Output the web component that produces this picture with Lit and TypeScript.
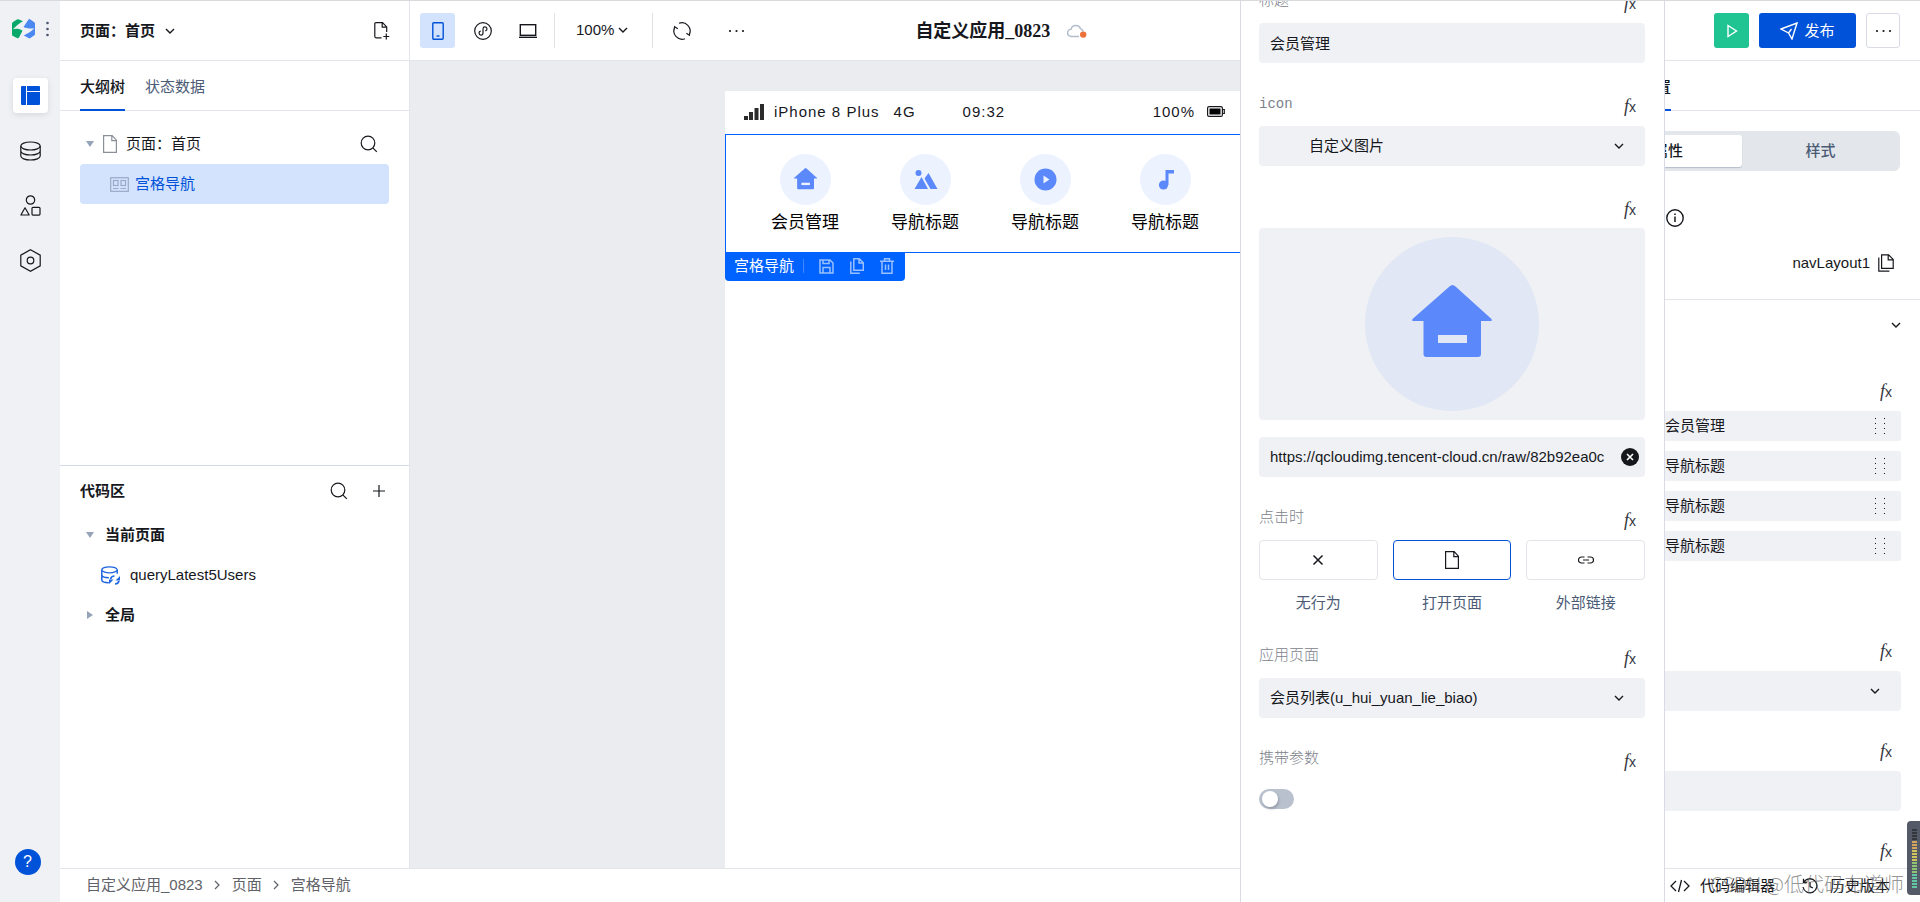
import { LitElement, html, css, svg, nothing, TemplateResult } from "lit";
import { customElement, state } from "lit/decorators.js";
import { classMap } from "lit/directives/class-map.js";

/** Wraps line-art in an SVG whose stroke follows the text colour. */
const icon = (w: number, h: number, body: unknown, cls = "") => html`<svg
  class="icon ${cls}" width=${w} height=${h} viewBox="0 0 ${w} ${h}" aria-hidden="true">${body}</svg>`;

const chevron = () => icon(10, 6, svg`<path d="M1 1l4 4 4-4" stroke-width="1.4"/>`);
const crumbArrow = () => icon(6, 10, svg`<path d="M1 1l4 4-4 4" stroke-width="1.2"/>`);
const search = () => icon(18, 18, svg`<circle cx="8" cy="8" r="6.8"/><path d="M12.8 12.8l4 4"/>`);
const dots = () => icon(17, 4, svg`<g fill="currentColor" stroke="none"><circle cx="2" cy="2" r="1.1"/><circle cx="8.5" cy="2" r="1.1"/><circle cx="15" cy="2" r="1.1"/></g>`);
const page = () => icon(14, 18, svg`<path d="M.6.6h8.6l4.2 4.6v12.2H.6zM8.8.8v4.8h4.4"/>`);
const caretDown = () => icon(8, 6, svg`<path d="M0 0h8L4 6z" fill="currentColor" stroke="none"/>`, "caret");
const caretRight = () => icon(8, 8, svg`<path d="M1 0l6 4-6 4z" fill="currentColor" stroke="none"/>`, "caret");
const copy = () => icon(16, 18, svg`<path d="M3.6.8h7l4.6 4.6v9H3.6zM10.2 1v4.8h4.8M.8 3.6v13.6h10.6"/>`);

const house = (size: number, bg: string) => html`<svg width=${size} height=${size} viewBox="0 0 174 174" aria-hidden="true">
  <circle cx="87" cy="87" r="87" fill=${bg}/>
  <path d="M84.500 49.500q3-3 6 0L126.500 82q1 2-1 2H116v33q0 3-3 3H61.500q-3 0-3-3V84H48.500q-2 0-1-2z" fill="#5b88fa"/>
  <rect x="73" y="98" width="29" height="8" fill=${bg}/>
</svg>`;
const badge = (body: unknown) => html`<svg width="51" height="51" viewBox="0 0 51 51" aria-hidden="true">
  <circle cx="25.500" cy="25.500" r="25.500" fill="#edf2ff"/><g fill="#5b88fa">${body}</g></svg>`;

interface NavItem { title: string; art: TemplateResult }

@customElement("app-root")
export class AppRoot extends LitElement {
  static styles = css`
    :host {
      display: grid;
      grid-template: minmax(0, 1fr) / 60px minmax(0, 1fr);
      position: relative;
      box-sizing: border-box;
      height: 100vh;
      overflow: hidden;
      border-top: 1px solid #d9dade;
      background: #fff;
      color: #16181d;
      font: 15px/20px "Liberation Sans", "Noto Sans CJK SC", sans-serif;
    }
    *, *::before { box-sizing: border-box; }
    button, input, select { font: inherit; color: inherit; margin: 0; border: 0; padding: 0; background: none; outline: none; }
    button { display: inline-flex; align-items: center; justify-content: center; cursor: pointer; }
    h1, h2, ul, ol, p { margin: 0; padding: 0; font: inherit; list-style: none; }
    svg { display: block; flex: none; }
    .icon { fill: none; stroke: currentColor; stroke-width: 1.2; }
    .strong { font-weight: 700; }
    .medium { font-weight: 500; }
    .grow { flex: 1; }

    .rail { display: flex; flex-direction: column; align-items: center; background: #f0f1f5; padding-bottom: 27px; }
    .brand { display: flex; align-items: center; gap: 11px; align-self: stretch; height: 55px; padding-left: 12px; margin-bottom: 22px; color: #4a5570; }
    .rail-nav { display: flex; flex-direction: column; gap: 20px; }
    .rail-btn { width: 35px; height: 35px; border-radius: 4px; }
    .rail-btn.on { background: #fff; color: #0052d9; box-shadow: 0 2px 6px rgba(0, 0, 0, .1); }
    .help { width: 26px; height: 26px; margin: auto 5px 0 0; border-radius: 50%; background: #0052d9; color: #fff; font-size: 16px; }

    .main { display: grid; grid-template: 60px minmax(0, 1fr) 34px / 350px minmax(0, 1fr) 360px; min-height: 0; }
    .page-head { display: flex; align-items: center; gap: 10px; padding: 0 19px 0 20px; border: solid #e3e5ea; border-width: 0 1px 1px 0; }
    .toolbar { grid-column: 2 / 4; display: flex; align-items: center; padding: 0 20px 0 10px; border-bottom: 1px solid #e3e5ea; }
    .devices { display: flex; gap: 10px; padding-right: 9px; }
    .tool { width: 35px; height: 35px; border-radius: 3px; }
    .tool.on { background: #d3e3fd; color: #0052d9; }
    .zoom { gap: 4px; height: 35px; padding: 0 24px 1px 21px; border: solid #e0e2e6; border-width: 0 1px; }
    .more-tools { display: flex; gap: 20px; padding-left: 11px; }
    .app-title { display: flex; align-items: center; gap: 17px; margin-left: 161px; font: 18px/24px "Liberation Serif", "Noto Sans CJK SC", serif; }
    .app-title h1 { font-weight: 600; }
    .actions { display: flex; gap: 10px; margin-left: auto; }
    .run { width: 35px; height: 35px; border-radius: 3px; background: #20c392; color: #fff; }
    .publish { gap: 6px; width: 97px; height: 35px; border-radius: 3px; background: #0052d9; color: #fff; }
    .more { width: 34px; height: 35px; border: 1px solid #d8dbe6; border-radius: 3px; }

    .side { display: flex; flex-direction: column; min-height: 0; border-right: 1px solid #e3e5ea; }
    .tabs { display: flex; flex: none; gap: 20px; height: 50px; padding: 0 20px; border-bottom: 1px solid #e3e5ea; color: #4b5b76; }
    .tab { height: 50px; padding-top: 4px; border-bottom: 2px solid transparent; }
    .tab.on { color: #16181d; border-color: #0052d9; }
    .tree { flex: 1; min-height: 0; padding: 13px 20px 0; }
    .row { display: flex; align-items: center; width: 100%; height: 40px; border-radius: 4px; }
    .caret { color: #97a3b9; width: 8px; }
    .tree-root { padding: 0 11px 1px 6px; }
    .tree-root .doc { color: #8b8f98; padding: 0 9px; }
    .tree-item { justify-content: flex-start; gap: 6px; padding-left: 30px; background: #d3e3fd; color: #0052d9; }
    .tree-item .icon { color: #9aa9c5; }
    .code { flex: none; height: 403px; padding: 0 20px; border-top: 1px solid #d5d8e6; }
    .code-head { display: flex; align-items: center; gap: 25px; height: 49px; padding-right: 4px; }
    .group { gap: 11px; padding-left: 6px; }
    .query { gap: 10px; justify-content: flex-start; padding-left: 21px; }
    .query .icon { color: #1e66e0; }

    .canvas { display: flex; justify-content: center; padding-top: 30px; background: #ebecf0; overflow: hidden; }
    .phone { width: 520px; background: #fff; }
    .status { display: grid; grid-template-columns: auto auto auto 1fr auto auto; align-items: center; height: 43px; padding: 0 20px 2px 19px; letter-spacing: 1px; }
    .status .device { padding: 0 14px 0 10px; }
    .status .network { padding-right: 47px; }
    .status .level { padding-right: 12px; }
    .grid { display: grid; grid-template-columns: repeat(4, 1fr); height: 119px; padding: 19px 19px 0; border: 1px solid #0062ff; color: #000; font-size: 17px; line-height: 24px; }
    .cell { display: flex; flex-direction: column; align-items: center; gap: 6px; }
    .tag { display: inline-flex; align-items: center; gap: 15px; height: 28px; padding: 0 11px 2px 9px; border-radius: 0 0 4px 4px; background: #0062ff; color: #fff; }
    .tag span { padding-right: 9px; border-right: 1px solid #3d86ff; line-height: 14px; }
    .tag button { color: #99c0ff; width: 15px; }

    .config { min-height: 0; overflow: hidden; display: flex; flex-direction: column; }
    .config .tabs { padding: 0 20px 0 81px; }
    .segment { display: grid; grid-template-columns: 1fr 1fr; flex: none; height: 40px; margin: 20px 20px 0 30px; padding: 4px; border-radius: 6px; background: #e3e6ea; color: #4b5b76; }
    .segment button { height: 32px; font-weight: 500; }
    .segment .on { margin-right: 3px; border-radius: 3px; background: #fff; color: #16181d; box-shadow: 0 1px 1px #b4bdcb; }
    .about { display: flex; flex: none; align-items: center; height: 24px; margin-top: 35px; padding-left: 106px; }
    .ident { display: flex; flex: none; align-items: center; justify-content: flex-end; gap: 8px; height: 50px; margin-top: 20px; padding: 0 26px 23px 0; border-bottom: 1px solid #e3e5ea; }
    .section { justify-content: flex-end; flex: none; height: 51px; padding: 0 19px 2px 0; }
    .props { padding: 0 19px 0 30px; }
    .prop { padding-top: 28px; }
    .prop .fx { margin-left: auto; margin-right: 7px; margin-bottom: 8px; }
    .items { display: grid; gap: 10px; padding-bottom: 50px; }
    .item { display: flex; align-items: center; justify-content: space-between; height: 30px; padding: 0 15px 0 75px; border-radius: 3px; background: #f0f1f5; }

    .fx { display: flex; align-items: baseline; justify-content: center; width: 16px; height: 24px; color: #33363d; font: italic 18px/24px "Liberation Serif", serif; }
    .fx small { font: 14px/24px "Liberation Sans", sans-serif; }

    .crumbs { grid-column: 1 / 3; border-top: 1px solid #e3e5ea; }
    .crumbs ol { display: flex; align-items: center; gap: 12px; height: 33px; padding: 0 0 2px 26px; color: #5f6268; }
    .crumbs li { display: flex; align-items: center; gap: 11px; }
    .crumbs a { color: inherit; text-decoration: none; }
    .foot { display: flex; align-items: center; padding: 0 30px 0 110px; border-top: 1px solid #e3e5ea; }
    .foot button { gap: 10px; white-space: nowrap; }
    .foot button + button { gap: 12px; margin-left: auto; }

    .drawer { position: absolute; top: 0; right: 255px; bottom: 0; width: 425px; padding: 0 19px 0 18px; overflow: hidden; background: #fff; border: solid #d8dae6; border-width: 0 1px; }
    .fields { display: grid; gap: 29px; margin-top: -12px; }
    .field { display: grid; gap: 10px; min-width: 0; }
    .caption { display: flex; justify-content: space-between; height: 24px; padding-right: 7px; color: #7d828b; font-weight: 300; line-height: 22px; }
    .caption .latin { font-family: "Liberation Mono", monospace; font-size: 14px; }
    .caption .fx { margin-top: 2px; }
    .box { display: flex; align-items: center; height: 40px; border-radius: 4px; background: #f0f1f5; }
    .box input, .box select { flex: 1; min-width: 0; height: 40px; padding: 0 0 1px 11px; appearance: none; }
    .box .indent { padding-left: 50px; }
    .box .icon { margin-right: 21px; pointer-events: none; }
    .clear { width: 18px; height: 18px; margin: 0 6px 0 17px; border-radius: 50%; background: #16181d; color: #fff; }
    .box .clear .icon { margin: 0; }
    .preview { display: flex; align-items: center; justify-content: center; height: 192px; margin: -1px 0 7px; border-radius: 4px; background: #f0f1f5; }
    .choices { display: grid; grid-template-columns: repeat(3, 1fr); gap: 15px; }
    .choice { display: grid; gap: 11px; text-align: center; line-height: 24px; color: #4b5b76; }
    .choice button { height: 40px; border: 1px solid #e3e5ea; border-radius: 4px; color: #16181d; }
    .choice .on { border-color: #0052d9; }
    .switch-line { display: flex; align-items: center; height: 36px; }
    .switch { appearance: none; width: 35px; height: 20px; padding: 2px 3px; border-radius: 10px; background: #b9c1cf; }
    .switch::before { content: ""; display: block; width: 16px; height: 16px; border-radius: 50%; background: #fff; box-shadow: 1px 2px 3px rgba(0, 0, 0, .2); }
    .switch:checked { background: #0052d9; padding-left: 16px; }

    .watermark { position: absolute; right: 16px; bottom: 6px; font: 300 20px/24px "Noto Sans CJK SC", sans-serif; color: rgba(90, 90, 90, .65); pointer-events: none; }
    .meter { position: absolute; right: 0; bottom: 7px; width: 13px; height: 74px; border-radius: 4px 0 0 4px; background: #555a69; }
  `;

  @state() private action = 1;
  @state() private carry = false;

  private nav: NavItem[] = [
    { title: "会员管理", art: house(51, "#edf2ff") },
    { title: "导航标题", art: badge(svg`<circle cx="18.500" cy="19" r="3"/><path d="M14.500 35l7-12 6.500 12zM24.500 24.500L28.500 19l9 16h-7z"/>`) },
    { title: "导航标题", art: badge(svg`<circle cx="25.500" cy="25.500" r="11"/><path d="M23.500 21.500l6 4-6 4z" fill="#edf2ff"/>`) },
    { title: "导航标题", art: badge(svg`<path d="M25.500 16H34v3.500h-5.500V31h-3z"/><circle cx="23.500" cy="31" r="4.600"/>`) },
  ];

  private choices = [
    { label: "无行为", art: icon(12, 12, svg`<path d="M1.500 1.500l9 9M10.500 1.500l-9 9" stroke-width="1.500"/>`) },
    { label: "打开页面", art: page() },
    { label: "外部链接", art: icon(16, 8, svg`<path d="M6.500 7H3.500a3 3 0 0 1 0-6h3M9.500 1h3a3 3 0 0 1 0 6h-3M5 4h6" stroke-width="1.200"/>`) },
  ];

  private fx() {
    return html`<button class="fx" aria-label="表达式">f<small>x</small></button>`;
  }

  private caption(text: string | TemplateResult, id = "") {
    return html`<div class="caption"><label for=${id || nothing}>${text}</label>${this.fx()}</div>`;
  }

  private renderRail() {
    return html`<aside class="rail">
      <div class="brand">
        <svg width="23" height="20" viewBox="0 0 23 20" aria-hidden="true">
          <path d="M0 4.500Q0 3.500 1 3L5 .5q1-.5 2 0L11 2.300C7 4.500 3 8 .8 10.500c2.200-1 6.700-1 9.700 1.300L7 18.500q-.5 1-1.500.8L1 17q-1-.5-1-1.500z" fill="#07a869"/>
          <path d="M11.500 8L16.500.5q.8-.8 1.500-.2L22 3q1 .5 1 1.500V15q0 1-1 1.500L18.500 19q-1 .5-2 0l-4.800-2.500c4-2 9-5 10.500-7.500-2.400 1-7.700.5-10.700-1z" fill="#4c88f2"/>
        </svg>
        ${icon(3, 16, svg`<g fill="currentColor" stroke="none"><circle cx="1.500" cy="2" r="1.300"/><circle cx="1.500" cy="8" r="1.300"/><circle cx="1.500" cy="14" r="1.300"/></g>`)}
      </div>
      <nav class="rail-nav">
        <button class="rail-btn on" aria-label="页面">${icon(19, 19, svg`<g fill="currentColor" stroke="none"><path d="M1 0h4v19H1q-1 0-1-1V1q0-1 1-1zM6 0h12q1 0 1 1v4H6zM6 6h13v12q0 1-1 1H6z"/></g>`)}</button>
        <button class="rail-btn" aria-label="数据">${icon(21, 20, svg`<ellipse cx="10.500" cy="5" rx="9.700" ry="4"/><path d="M.8 5v10c0 2.200 4.300 4 9.700 4s9.700-1.800 9.700-4V5M.8 10c0 2.200 4.300 4 9.700 4s9.700-1.800 9.700-4"/>`)}</button>
        <button class="rail-btn" aria-label="组件">${icon(21, 21, svg`<circle cx="10.500" cy="5" r="4.200"/><path d="M5 12.800L9.200 20H.9z" stroke-linejoin="round"/><rect x="12" y="12.300" width="8" height="7.800" rx="1"/>`)}</button>
        <button class="rail-btn" aria-label="设置">${icon(21, 23, svg`<path d="M10.500.8l9.700 5.400v10.600l-9.700 5.400-9.700-5.400V6.200z"/><circle cx="10.500" cy="11.500" r="3.300"/>`)}</button>
      </nav>
      <button class="help">?</button>
    </aside>`;
  }

  private renderHeader() {
    return html`
      <div class="page-head">
        <h2 class="strong">页面：首页</h2>${chevron()}<span class="grow"></span>
        <button aria-label="新建页面">${icon(16, 18, svg`<path d="M7.500 15.800H2q-1.200 0-1.200-1.200V1.800Q.8.7 2 .7h6.500l4.200 4.200v5M8.200.8v4.400h4.300M12.300 11.500v6M9.300 14.500h6"/>`)}</button>
      </div>
      <header class="toolbar">
        <div class="devices">
          <button class="tool on" aria-label="手机">${icon(12, 18, svg`<rect x=".8" y=".8" width="10.400" height="16.400" rx="1" stroke-width="1.400"/><path d="M4.500 14h3" stroke-width="1.400"/>`)}</button>
          <button class="tool" aria-label="小程序">${icon(18, 18, svg`<circle cx="9" cy="9" r="8.300"/><path d="M9 6.800v4.600M9 6.600a2 2 0 1 1 2.300 2.200M9 11.400a2 2 0 1 1-2.300-2.200"/>`)}</button>
          <button class="tool" aria-label="电脑">${icon(18, 14, svg`<rect x="1.300" y=".7" width="15.400" height="10.600" stroke-width="1.400"/><path d="M0 13.300h18" stroke-width="1.400"/>`)}</button>
        </div>
        <button class="zoom">100%${chevron()}</button>
        <div class="more-tools">
          <button class="tool" aria-label="刷新">${icon(18, 18, svg`<path d="M6 1.300a8.300 8.300 0 0 1 10.500 11M12 16.700A8.300 8.300 0 0 1 1.500 5.700M1 8.500l.6-3.700 3.200 2M17 9.500l-.6 3.700-3-2"/>`)}</button>
          <button class="tool" aria-label="更多">${dots()}</button>
        </div>
        <div class="app-title">
          <h1>自定义应用_0823</h1>
          ${icon(20, 14, svg`<path d="M12 12.500H4.300A3.600 3.600 0 0 1 4 5.300 5 5 0 0 1 13.600 5" stroke="#b3bccb" stroke-width="1.500"/><path d="M13.500 5a3.500 3.500 0 0 1 2.800 2.500" stroke="#b3bccb" stroke-width="1.500"/><circle cx="16.200" cy="10.600" r="3.200" fill="#ed7038" stroke="none"/>`)}
        </div>
        <div class="actions">
          <button class="run" aria-label="预览">${icon(12, 14, svg`<path d="M2 1.500L10.500 7 2 12.500z" stroke-width="1.400"/>`)}</button>
          <button class="publish">${icon(18, 18, svg`<path d="M1 7L17 1l-5 16-3.500-6zM8.500 11L1 7M8.500 11l3-4" stroke-width="1.400"/>`)}发布</button>
          <button class="more" aria-label="更多">${dots()}</button>
        </div>
      </header>`;
  }

  private renderSide() {
    return html`<section class="side">
      <div class="tabs"><button class="tab on medium">大纲树</button><button class="tab">状态数据</button></div>
      <div class="tree">
        <div class="row tree-root">${caretDown()}<span class="doc">${page()}</span><span class="grow">页面：首页</span><button aria-label="搜索">${search()}</button></div>
        <button class="row tree-item">${icon(19, 15, svg`<rect x=".7" y=".7" width="17.600" height="13.600"/><rect x="3.500" y="3.500" width="4.500" height="5"/><rect x="11" y="3.500" width="4.500" height="5"/><path d="M3 11.500h5.500M10.500 11.500H16"/>`)}宫格导航</button>
      </div>
      <div class="code">
        <div class="code-head"><h2 class="strong grow">代码区</h2><button aria-label="搜索">${search()}</button><button aria-label="新增">${icon(12, 12, svg`<path d="M6 0v12M0 6h12"/>`)}</button></div>
        <div class="row group strong">${caretDown()}当前页面</div>
        <button class="row query">${icon(19, 19, svg`<ellipse cx="8.500" cy="3.800" rx="7.700" ry="3"/><path d="M.8 3.800v10c0 1.700 3 3 7 3M16.200 3.800v4M.8 8.800c0 1.700 3 3 7 3" stroke-width="1.500"/><path d="M9.500 13a4.200 4.200 0 0 1 4-3M18 15a4.200 4.200 0 0 1-4 3" stroke-width="1.700"/><path d="M8 13.500h4.500L8 18zM19 14.500h-4.500L19 10z" fill="currentColor" stroke="none"/>`)}queryLatest5Users</button>
        <div class="row group strong">${caretRight()}全局</div>
      </div>
    </section>`;
  }

  private renderCanvas() {
    return html`<main class="canvas"><div class="phone">
      <div class="status">
        ${icon(20, 16, svg`<g fill="#2b2b2b" stroke="none"><path d="M0 12h4v4H0zM5 8h4v8H5zM10.500 4h4v12h-4zM16 0h4v16h-4z"/></g>`)}
        <span class="device">iPhone 8 Plus</span><span class="network">4G</span><time>09:32</time><span class="level">100%</span>
        ${icon(18, 11, svg`<rect x=".6" y=".6" width="14.800" height="9.800" rx="1.500"/><rect x="2.500" y="2.500" width="11" height="6" fill="#000" stroke="none"/><path d="M15.500 3.500h1.800v4h-1.800"/>`)}
      </div>
      <div class="grid">${this.nav.map((n) => html`<div class="cell">${n.art}<span>${n.title}</span></div>`)}</div>
      <div class="tag"><span>宫格导航</span>
        <button aria-label="保存">${icon(15, 15, svg`<path d="M1 1h10l3 3v10H1zM4 1v3.500h6V1M4 14V8.500h7V14" stroke-width="1.500"/>`)}</button>
        <button aria-label="复制">${icon(14, 16, svg`<path d="M3.800.8h5.500l4 4v7.500H3.800zM9 1v4h4M.8 3.500v11.700h9" stroke-width="1.500"/>`)}</button>
        <button aria-label="删除">${icon(14, 16, svg`<path d="M0 3.200h14M4.500 3V.8h5V3M2 3.500v11.700h10V3.500M5.500 6.500v5.500M8.500 6.500v5.500" stroke-width="1.500"/>`)}</button>
      </div>
    </div></main>`;
  }

  private renderConfig() {
    return html`<section class="config">
      <div class="tabs"><button class="tab on medium">配置</button></div>
      <div class="segment"><button class="on">属性</button><button>样式</button></div>
      <div class="about">${icon(18, 18, svg`<circle cx="9" cy="9" r="8.200" stroke-width="1.400"/><path d="M9 7.500V13M9 4.500v1.600" stroke-width="1.500"/>`)}</div>
      <div class="ident">navLayout1<button aria-label="复制">${copy()}</button></div>
      <button class="section" aria-label="折叠">${chevron()}</button>
      <div class="props">
        <div class="prop">${this.fx()}
          <ul class="items">${this.nav.map((n) => html`<li class="item">${n.title}
            ${icon(12, 18, svg`<g fill="currentColor" stroke="none">${[1, 6, 11, 16].map((y) => svg`<rect x="1" y=${y} width="1" height="1"/><rect x="10" y=${y} width="1" height="1"/>`)}</g>`)}</li>`)}</ul>
        </div>
        <div class="prop">${this.fx()}<div class="box"><select aria-label="模板"></select>${chevron()}</div></div>
        <div class="prop">${this.fx()}<div class="box"><input aria-label="样式类" /></div></div>
        <div class="prop">${this.fx()}</div>
      </div>
    </section>`;
  }

  private renderFooter() {
    return html`
      <nav class="crumbs"><ol>
        <li><a href="#app">自定义应用_0823</a>${crumbArrow()}</li>
        <li><a href="#page">页面</a>${crumbArrow()}</li>
        <li><a href="#grid">宫格导航</a></li>
      </ol></nav>
      <footer class="foot">
        <button>${icon(20, 14, svg`<path d="M6 2L1 7l5 5M14 2l5 5-5 5M11.500 1l-3 12" stroke-width="1.300"/>`)}代码编辑器</button>
        <button>${icon(16, 16, svg`<path d="M2 4a7 7 0 1 1-1 5M1.500.8v3.700h3.700M8 4v4.500l3 1.500" stroke-width="1.300"/>`)}历史版本</button>
      </footer>`;
  }

  private renderDrawer() {
    return html`<section class="drawer"><div class="fields">
      <div class="field">${this.caption("标题", "title")}<div class="box"><input id="title" .value=${"会员管理"} /></div></div>
      <div class="field">${this.caption(html`<span class="latin">icon</span>`, "kind")}
        <div class="box"><select id="kind" class="indent"><option>自定义图片</option></select>${chevron()}</div></div>
      <div class="field">${this.caption("")}
        <div class="preview">${house(174, "#e1e7f5")}</div>
        <div class="box"><input aria-label="图片地址" .value=${"https://qcloudimg.tencent-cloud.cn/raw/82b92ea0c"} />
          <button class="clear" aria-label="清除">${icon(8, 8, svg`<path d="M1 1l6 6M7 1L1 7" stroke-width="1.600"/>`)}</button></div>
      </div>
      <div class="field">${this.caption("点击时")}
        <div class="choices">${this.choices.map((c, i) => html`<label class="choice">
          <button class=${classMap({ on: i === this.action })} @click=${() => (this.action = i)}>${c.art}</button>${c.label}</label>`)}</div>
      </div>
      <div class="field">${this.caption("应用页面", "target")}
        <div class="box"><select id="target"><option>会员列表(u_hui_yuan_lie_biao)</option></select>${chevron()}</div></div>
      <div class="field">${this.caption("携带参数", "carry")}
        <div class="switch-line"><input id="carry" class="switch" type="checkbox" .checked=${this.carry}
          @change=${(e: Event) => (this.carry = (e.target as HTMLInputElement).checked)} /></div></div>
    </div></section>`;
  }

  render() {
    return html`
      ${this.renderRail()}
      <div class="main">
        ${this.renderHeader()}${this.renderSide()}${this.renderCanvas()}${this.renderConfig()}${this.renderFooter()}
      </div>
      ${this.renderDrawer()}
      <div class="watermark">CSDN @低代码布道师</div>
      <svg class="meter" viewBox="0 0 13 74" aria-hidden="true">
        ${Array.from({ length: 20 }, (_, i) => svg`<rect x="5" y=${8 + i * 3} width="5" height="2"
          fill=${i < 4 ? "#34363e" : i < 7 ? "#d3a65c" : i < 11 ? "#cfc55c" : i < 15 ? "#8fc474" : "#62c8a4"}/>`)}
      </svg>`;
  }
}
